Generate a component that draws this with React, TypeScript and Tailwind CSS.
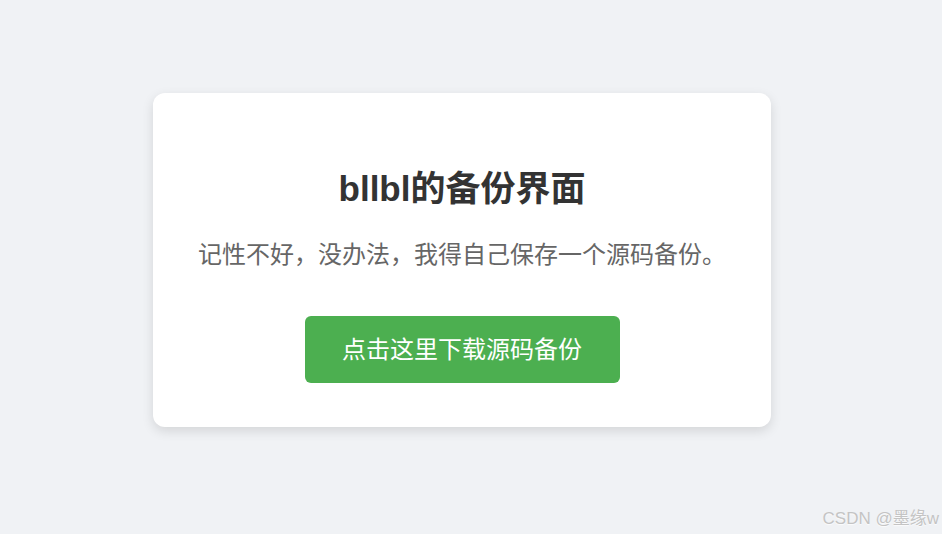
import React from "react";

export default function App() {
  return (
    <div
      className="relative w-[942px] h-[534px] bg-[#f0f2f5] overflow-hidden"
      style={{ fontFamily: '"Liberation Sans", "Noto Sans CJK SC", sans-serif' }}
    >
      <div className="flex justify-center pt-[93px] pr-[18px]">
        <div className="w-[618px] h-[334px] bg-white rounded-[12px] shadow-[0_4px_12px_rgba(0,0,0,0.12)] flex flex-col items-center pt-[76px]">
          <h1 className="text-[35px] leading-[40px] font-bold text-[#333333]">
            bllbl的备份界面
          </h1>
          <p className="mt-[30px] text-[24px] leading-[32px] text-[#666666]">
            记性不好，没办法，我得自己保存一个源码备份。
          </p>
          <button className="mt-[45px] w-[315px] h-[67px] bg-[#4caf50] text-white text-[24px] rounded-[6px] flex items-center justify-center">
            点击这里下载源码备份
          </button>
        </div>
      </div>
      <div className="absolute right-[3px] bottom-[5px] text-[17px] leading-[20px] text-[#c4c4c4] [text-shadow:0_1px_1px_rgba(255,255,255,0.8)]">
        CSDN @墨缘w
      </div>
    </div>
  );
}
